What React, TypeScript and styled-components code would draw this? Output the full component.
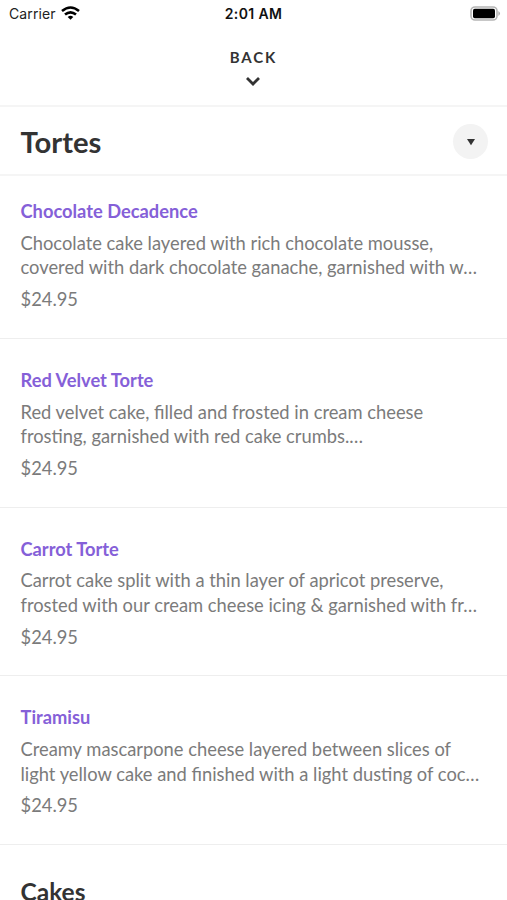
import React from "react";
import styled, { createGlobalStyle } from "styled-components";

const Global = createGlobalStyle`
  * { box-sizing: border-box; }
  body { margin: 0; background: #fff; font-family: Lato, sans-serif; overflow: hidden; }
  h1, h2, p { margin: 0; }
`;
const Screen = styled.main`
  width: 507px; height: 900px; overflow: hidden; background: #fff;
`;
const StatusBar = styled.div`
  display: grid; grid-template-columns: 1fr auto 1fr; align-items: center;
  height: 27px; padding: 0 6px 0 9px; color: #222;
  font: 14px Inter, sans-serif;
`;
const Carrier = styled.span`
  display: flex; align-items: center; gap: 5.5px; letter-spacing: .12px;
`;
const WifiIcon = styled.svg`
  display: block; margin-bottom: 1px;
`;
const Clock = styled.strong`
  font-weight: 600; font-size: 14px; letter-spacing: .35px; color: #111;
  margin-right: 3px;
`;
const Battery = styled.svg`
  justify-self: end; display: block; margin-bottom: 1px;
`;
const BackButton = styled.button`
  display: flex; flex-direction: column; align-items: center;
  width: 100%; height: 80px; padding: 21px 0 0; border: 0; border-bottom: 2px solid #f5f5f5;
  background: #fff; color: #333; font: 700 15px/18px Lato, sans-serif; letter-spacing: 1.9px;
`;
const Chevron = styled.svg`
  margin: 10px 1px 0 0;
`;
const SectionHeader = styled.header`
  display: flex; justify-content: space-between; align-items: center;
  height: 69px; padding: 2px 19px 0 20.5px; border-bottom: 2px solid #f5f5f5;
`;
const Title = styled.h1`
  font-size: 29.2px; line-height: 34px; font-weight: 700; color: #333;
`;
const Toggle = styled.button`
  display: grid; place-items: center; width: 35px; height: 35px; padding: 0;
  border: 0; border-radius: 50%; background: #f3f3f3;
`;
const Item = styled.article<{ $first: boolean }>`
  height: ${({ $first }) => ($first ? "163px" : "168.67px")};
  padding: ${({ $first }) => ($first ? "24px" : "30px")} 20.5px 0;
  border-bottom: 1px solid #eee;
`;
const Name = styled.h2`
  font-size: 18.3px; line-height: 22px; font-weight: 700; color: #8560d8;
`;
const Description = styled.p`
  margin-top: 8.8px; font-size: 18.33px; line-height: 24.6px; color: #7b7b7b; white-space: pre;
`;
const Price = styled.p`
  margin-top: 7px; font-size: 18.33px; line-height: 24px; color: #7b7b7b;
`;
const NextTitle = styled(Title)`
  padding: 30px 20.5px 0; font-size: 24.5px;
`;

const items = [
  ["Chocolate Decadence", "Chocolate cake layered with rich chocolate mousse,\ncovered with dark chocolate ganache, garnished with w…"],
  ["Red Velvet Torte", "Red velvet cake, filled and frosted in cream cheese\nfrosting, garnished with red cake crumbs.…"],
  ["Carrot Torte", "Carrot cake split with a thin layer of apricot preserve,\nfrosted with our cream cheese icing & garnished with fr…"],
  ["Tiramisu", "Creamy mascarpone cheese layered between slices of\nlight yellow cake and finished with a light dusting of coc…"],
];

export default function App() {
  return (
    <Screen>
      <Global />
      <StatusBar>
        <Carrier>
          Carrier
          <WifiIcon width="19" height="14" viewBox="0 0 19 14" fill="none" stroke="#000" strokeWidth="2.6">
            <path d="M1 5Q9.5-2 18 5M4 8.6Q9.5 4 15 8.6" />
            <path d="M6.7 10.9Q9.5 8.6 12.3 10.9L9.5 13.8Z" fill="#000" stroke="none" />
          </WifiIcon>
        </Carrier>
        <Clock>2:01 AM</Clock>
        <Battery width="31" height="15" viewBox="0 0 31 15">
          <rect x="1" y="1" width="26" height="13" rx="4" fill="#fff" stroke="#b5b5b5" strokeWidth="1.6" />
          <rect x="3" y="2.8" width="22" height="9.4" rx="1.7" />
          <path d="M28.4 5q3.2 2.5 0 5z" fill="#aaa" />
        </Battery>
      </StatusBar>
      <BackButton>
        BACK
        <Chevron width="16" height="11" viewBox="0 0 16 11" fill="none" stroke="#333" strokeWidth="2.8">
          <path d="M2 2l6 6 6-6" />
        </Chevron>
      </BackButton>
      <SectionHeader>
        <Title>Tortes</Title>
        <Toggle aria-label="Choose section">
          <svg width="10" height="8" viewBox="0 0 10 8"><path d="M1 1h8L5 7.3z" fill="#333" /></svg>
        </Toggle>
      </SectionHeader>
      {items.map(([name, text], index) => (
        <Item key={name} $first={index === 0}>
          <Name>{name}</Name>
          <Description>{text}</Description>
          <Price>$24.95</Price>
        </Item>
      ))}
      <NextTitle as="h2">Cakes</NextTitle>
    </Screen>
  );
}
